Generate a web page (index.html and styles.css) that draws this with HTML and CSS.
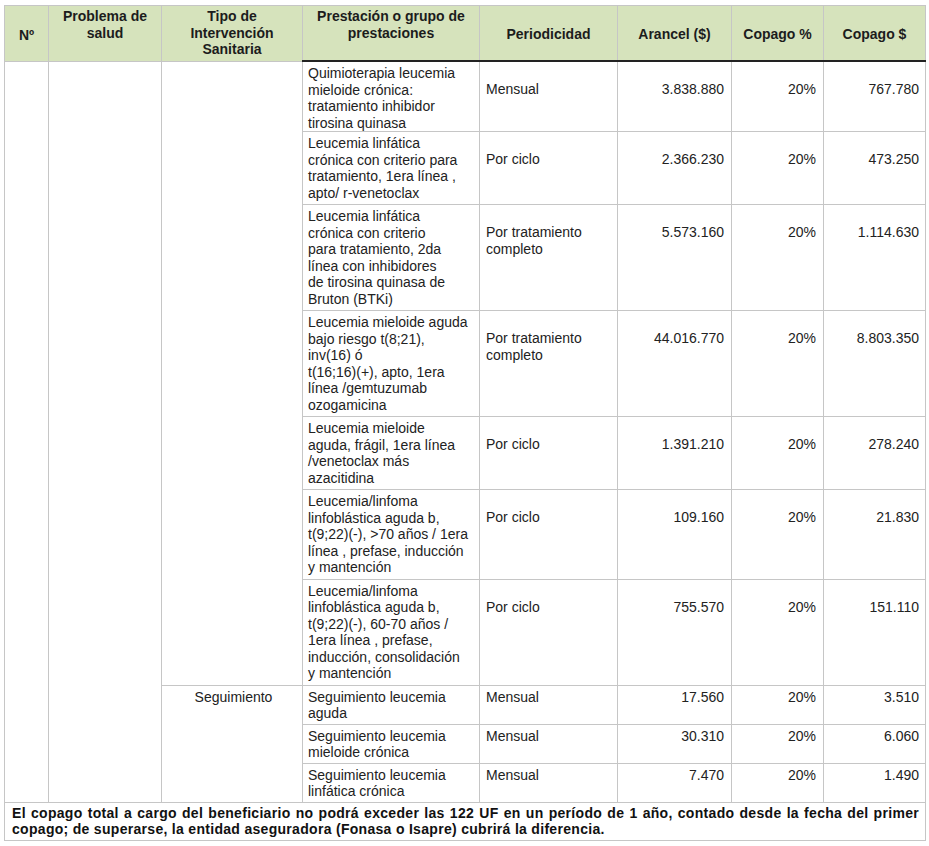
FILE: index.html
```html
<!DOCTYPE html>
<html lang="es">
<head>
<meta charset="utf-8">
<title>Prestaciones</title>
<link rel="stylesheet" href="styles.css">
</head>
<body>
<table class="grid">
  <colgroup>
    <col class="c1"><col class="c2"><col class="c3"><col class="c4">
    <col class="c5"><col class="c6"><col class="c7"><col class="c8">
  </colgroup>
  <thead>
    <tr>
      <th class="mid">Nº</th>
      <th class="top">Problema de<br>salud</th>
      <th class="top">Tipo de<br>Intervención<br>Sanitaria</th>
      <th class="top dark">Prestación o grupo de<br>prestaciones</th>
      <th class="mid dark">Periodicidad</th>
      <th class="mid dark">Arancel ($)</th>
      <th class="mid dark">Copago %</th>
      <th class="mid dark">Copago $</th>
    </tr>
  </thead>
  <tbody>
    <tr class="big first">
      <td rowspan="10"></td>
      <td rowspan="10"></td>
      <td rowspan="7"></td>
      <td class="desc">Quimioterapia leucemia<br>mieloide crónica:<br>tratamiento inhibidor<br>tirosina quinasa</td>
      <td class="per">Mensual</td>
      <td class="num">3.838.880</td>
      <td class="num">20%</td>
      <td class="num last">767.780</td>
    </tr>
    <tr class="big">
      <td class="desc">Leucemia linfática<br>crónica con criterio para<br>tratamiento, 1era línea ,<br>apto/ r-venetoclax</td>
      <td class="per">Por ciclo</td>
      <td class="num">2.366.230</td>
      <td class="num">20%</td>
      <td class="num last">473.250</td>
    </tr>
    <tr class="big">
      <td class="desc">Leucemia linfática<br>crónica con criterio<br>para tratamiento, 2da<br>línea con inhibidores<br>de tirosina quinasa de<br>Bruton (BTKi)</td>
      <td class="per">Por tratamiento<br>completo</td>
      <td class="num">5.573.160</td>
      <td class="num">20%</td>
      <td class="num last">1.114.630</td>
    </tr>
    <tr class="big">
      <td class="desc">Leucemia mieloide aguda<br>bajo riesgo t(8;21),<br>inv(16) ó<br>t(16;16)(+), apto, 1era<br>línea /gemtuzumab<br>ozogamicina</td>
      <td class="per">Por tratamiento<br>completo</td>
      <td class="num">44.016.770</td>
      <td class="num">20%</td>
      <td class="num last">8.803.350</td>
    </tr>
    <tr class="big">
      <td class="desc">Leucemia mieloide<br>aguda, frágil, 1era línea<br>/venetoclax más<br>azacitidina</td>
      <td class="per">Por ciclo</td>
      <td class="num">1.391.210</td>
      <td class="num">20%</td>
      <td class="num last">278.240</td>
    </tr>
    <tr class="big">
      <td class="desc">Leucemia/linfoma<br>linfoblástica aguda b,<br>t(9;22)(-), &gt;70 años / 1era<br>línea , prefase, inducción<br>y mantención</td>
      <td class="per">Por ciclo</td>
      <td class="num">109.160</td>
      <td class="num">20%</td>
      <td class="num last">21.830</td>
    </tr>
    <tr class="big">
      <td class="desc">Leucemia/linfoma<br>linfoblástica aguda b,<br>t(9;22)(-), 60-70 años /<br>1era línea , prefase,<br>inducción, consolidación<br>y mantención</td>
      <td class="per">Por ciclo</td>
      <td class="num">755.570</td>
      <td class="num">20%</td>
      <td class="num last">151.110</td>
    </tr>
    <tr class="small">
      <td rowspan="3" class="tipo">Seguimiento</td>
      <td class="desc">Seguimiento leucemia<br>aguda</td>
      <td class="per">Mensual</td>
      <td class="num">17.560</td>
      <td class="num">20%</td>
      <td class="num last">3.510</td>
    </tr>
    <tr class="small">
      <td class="desc">Seguimiento leucemia<br>mieloide crónica</td>
      <td class="per">Mensual</td>
      <td class="num">30.310</td>
      <td class="num">20%</td>
      <td class="num last">6.060</td>
    </tr>
    <tr class="small">
      <td class="desc">Seguimiento leucemia<br>linfática crónica</td>
      <td class="per">Mensual</td>
      <td class="num">7.470</td>
      <td class="num">20%</td>
      <td class="num last">1.490</td>
    </tr>
  </tbody>
  <tfoot>
    <tr>
      <td colspan="8" class="note"><span class="line1">El copago total a cargo del beneficiario no podrá exceder las 122 UF en un período de 1 año, contado desde la fecha del primer</span> copago; de superarse, la entidad aseguradora (Fonasa o Isapre) cubrirá la diferencia.</td>
    </tr>
  </tfoot>
</table>
</body>
</html>
```

FILE: styles.css
```css
html, body {
  margin: 0;
  padding: 0;
  background: #ffffff;
}

body {
  font-family: "Liberation Sans", Arial, sans-serif;
  font-size: 14px;
  color: #222222;
}

.grid {
  margin: 5px 0 0 4px;
  width: 921px;
  table-layout: fixed;
  border-collapse: collapse;
}

.c1 { width: 44px; }
.c2 { width: 113px; }
.c3 { width: 141px; }
.c4 { width: 177px; }
.c5 { width: 138px; }
.c6 { width: 114px; }
.c7 { width: 92px; }
.c8 { width: 102px; }

.grid th,
.grid td {
  border: 1px solid #c6c6c6;
  line-height: 16.5px;
  padding: 0;
}

.grid th {
  background: #d6e3bc;
  font-weight: bold;
  color: #1c1c1c;
  text-align: center;
  padding: 2px 4px 3px;
  white-space: nowrap;
}

.grid th.top { vertical-align: top; }
.grid th.mid { vertical-align: middle; padding-top: 4px; padding-bottom: 1px; }
.grid th.dark { border-bottom: 2px solid #222222; }

.grid td {
  vertical-align: top;
  padding-top: 3px;
  padding-bottom: 3px;
}

.grid td.desc {
  padding-left: 5px;
  white-space: nowrap;
}

.first .desc { padding-bottom: 0; }
.grid .small td { padding-bottom: 2px; }

.grid td.per {
  padding-left: 6px;
  white-space: nowrap;
}

.grid td.num {
  text-align: right;
  padding-right: 7px;
}

.grid td.num.last { padding-right: 6px; }

.big .per,
.big .num {
  padding-top: 19px;
}

.small .desc { padding-left: 7px; }
.small .per { padding-left: 8px; }

.grid td.tipo {
  text-align: center;
  padding-left: 3px;
}

.grid td.note {
  font-weight: bold;
  color: #111111;
  letter-spacing: 0.3px;
  line-height: 16.7px;
  padding: 2px 6px 2px 7px;
}

.line1 {
  display: block;
  text-align: justify;
  text-align-last: justify;
}
```
